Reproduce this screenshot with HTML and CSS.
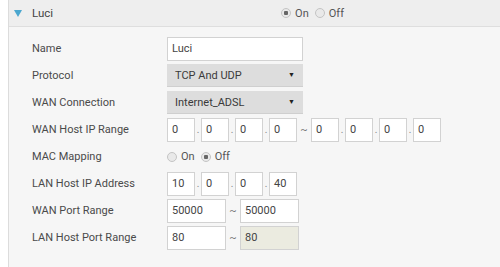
FILE: index.html
```html
<!DOCTYPE html>
<html lang="en">
<head>
  <meta charset="UTF-8" />
  <meta name="viewport" content="width=device-width, initial-scale=1.0"/>
  <title>Port Mapping - Luci</title>
  <link rel="stylesheet" href="styles.css">
</head>
<body>
  <div class="panel">
    <div class="panel-head">
      <span class="caret"></span>
      <span class="title">Luci</span>
      <div class="switch">
        <label class="radio"><span class="dot checked"></span>On</label>
        <label class="radio"><span class="dot"></span>Off</label>
      </div>
    </div>

    <div class="panel-body">
      <div class="row">
        <div class="label">Name</div>
        <div class="field"><div class="input wide">Luci</div></div>
      </div>

      <div class="row">
        <div class="label">Protocol</div>
        <div class="field"><div class="select">TCP And UDP<span class="arrow">&#9660;</span></div></div>
      </div>

      <div class="row">
        <div class="label">WAN Connection</div>
        <div class="field"><div class="select">Internet_ADSL<span class="arrow">&#9660;</span></div></div>
      </div>

      <div class="row">
        <div class="label">WAN Host IP Range</div>
        <div class="field">
          <div class="input ip">0</div><span class="sep">.</span>
          <div class="input ip">0</div><span class="sep">.</span>
          <div class="input ip">0</div><span class="sep">.</span>
          <div class="input ip">0</div><span class="tilde">~</span>
          <div class="input ip">0</div><span class="sep">.</span>
          <div class="input ip">0</div><span class="sep">.</span>
          <div class="input ip">0</div><span class="sep">.</span>
          <div class="input ip">0</div>
        </div>
      </div>

      <div class="row">
        <div class="label">MAC Mapping</div>
        <div class="field">
          <label class="radio"><span class="dot"></span>On</label>
          <label class="radio"><span class="dot checked"></span>Off</label>
        </div>
      </div>

      <div class="row">
        <div class="label">LAN Host IP Address</div>
        <div class="field">
          <div class="input ip">10</div><span class="sep">.</span>
          <div class="input ip">0</div><span class="sep">.</span>
          <div class="input ip">0</div><span class="sep">.</span>
          <div class="input ip">40</div>
        </div>
      </div>

      <div class="row">
        <div class="label">WAN Port Range</div>
        <div class="field">
          <div class="input port">50000</div><span class="tilde">~</span>
          <div class="input port">50000</div>
        </div>
      </div>

      <div class="row">
        <div class="label">LAN Host Port Range</div>
        <div class="field">
          <div class="input port">80</div><span class="tilde">~</span>
          <div class="input port disabled">80</div>
        </div>
      </div>
    </div>
  </div>
</body>
</html>
```

FILE: styles.css
```css
body {
  margin: 0;
  background: #ffffff;
  font-family: Roboto, 'Liberation Sans', sans-serif;
  font-size: 11px;
  color: #444;
}

.panel {
  margin-left: 8px;
  height: 267px;
  border-left: 1px solid #dcdcdc;
  background: #f6f6f6;
}

.panel-head {
  height: 26px;
  display: flex;
  align-items: center;
  background: #eeeeee;
  border-bottom: 1px solid #dedede;
}

.caret {
  width: 0;
  height: 0;
  margin-left: 5px;
  border-left: 4px solid transparent;
  border-right: 4px solid transparent;
  border-top: 7px solid #4ba7cf;
}

.title {
  margin-left: 10px;
  font-size: 11.5px;
}

.switch {
  display: flex;
  margin-left: 228px;
}

.panel-body {
  padding: 8px 0 0 23px;
}

.row {
  display: flex;
  align-items: center;
  height: 27px;
}

.label {
  width: 135px;
  color: #4a4a4a;
}

.field {
  display: flex;
  align-items: center;
}

.input {
  box-sizing: border-box;
  height: 24px;
  line-height: 22px;
  padding-left: 4px;
  background: #ffffff;
  border: 1px solid #d2d2d2;
  color: #444;
}

.input.wide {
  width: 136px;
}

.input.ip {
  width: 28px;
}

.input.port {
  width: 59px;
}

.input.disabled {
  background: #ebebe0;
}

.sep {
  width: 6px;
  text-align: center;
  color: #888;
  font-size: 10px;
}

.tilde {
  width: 14px;
  text-align: center;
  color: #777;
}

.select {
  box-sizing: border-box;
  width: 136px;
  height: 23px;
  line-height: 23px;
  padding-left: 8px;
  background: #dddddd;
  border-bottom: 1px solid #cfcfcf;
  display: flex;
  justify-content: space-between;
  color: #3a3a3a;
}

.arrow {
  font-size: 7px;
  margin-right: 8px;
  color: #222;
}

.radio {
  display: flex;
  align-items: center;
  margin-right: 6px;
  color: #555;
}

.dot {
  box-sizing: border-box;
  width: 10px;
  height: 10px;
  margin-right: 4px;
  border: 1px solid #c4c4c4;
  border-radius: 50%;
  background: #e9e9e9;
}

.dot.checked {
  background: radial-gradient(circle, #666 0 2px, #e9e9e9 2.5px);
}
```
